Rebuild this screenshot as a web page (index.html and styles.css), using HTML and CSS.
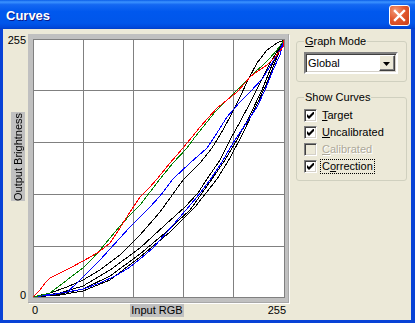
FILE: index.html
```html
<!DOCTYPE html>
<html lang="en">
<head>
  <meta charset="UTF-8" />
  <title>Curves</title>
  <link rel="stylesheet" href="styles.css">
</head>
<body>
<div class="window">
  <div class="titlebar">
    <span class="title">Curves</span>
    <button class="close" title="Close">
      <svg width="13" height="13" viewBox="0 0 13 13"><path d="M2 2L11 11M11 2L2 11" stroke="#fff" stroke-width="2.4" stroke-linecap="square"/></svg>
    </button>
  </div>
  <div class="client">
    <div class="chart">
      <div class="yaxis">
        <span class="tick">255</span>
        <span class="axis-name vertical">Output Brightness</span>
        <span class="tick low">0</span>
      </div>
      <div class="plot-frame">
        <svg class="plot" width="252" height="259" viewBox="33 39 252 259" shape-rendering="crispEdges">
          <path class="grid" d="M33.5 39V298M83.5 39V298M133.5 39V298M183.5 39V298M233.5 39V298M284.5 39V298M33 39.5H285M33 90.5H285M33 142.5H285M33 194.5H285M33 246.5H285M33 297.5H285"/>
          <g class="curves">
            <polyline class="black" points="33,297 50,293 67,287 83,280 100,270 120,255 140,235 160,212 183,180 200,163 212,148 223,130 232,113 240,97 248,80 257,63 267,50 277,43 284,40"/>
            <polyline class="black" points="33,297 60,293 83,286 110,270 140,248 165,225 185,207 198,193 207,179 220,160 230,140 240,122 250,103 260,83 270,63 284,40"/>
            <polyline class="black" points="33,297 60,294 83,289 110,276 140,254 165,233 190,210 212,179 225,160 237,140 250,115 262,90 272,65 284,40"/>
            <polyline class="black" points="33,297 60,295 83,291 110,280 140,257 170,232 195,207 217,179 230,158 242,135 255,108 266,85 275,62 284,40"/>
            <polyline class="blue" points="33,297 50,295 67,292 83,289 100,283 117,275 130,267 140,259 153,248 167,232 180,217 197,197 210,180 222,162 233,143 245,125 257,107 265,90 273,70 280,55 284,40"/>
            <polyline class="blue" points="33,297 45,295 55,294 67,292 75,285 83,277 92,268 100,260 110,249 120,238 130,227 140,217 150,207 160,196 173,179 190,163 207,148 217,133 227,117 240,102 250,92 263,78 272,63 280,50 284,40"/>
            <polyline class="green" points="33,297 42,295 50,293 58,287 67,280 75,274 83,268 92,259 100,250 110,238 120,226 130,215 140,205 150,192 160,179 173,163 187,148 195,137 203,127 215,112 230,97 240,87 247,80 255,72 262,66 270,58 277,50 284,40"/>
            <polyline class="red" points="33,297 40,290 45,283 50,278 60,273 70,268 83,261 92,256 100,251 110,243 120,228 130,212 140,197 150,187 157,179 170,163 183,148 192,137 200,127 208,118 217,108 227,100 237,92 245,83 250,77 258,71 267,65 275,57 283,47 284,40"/>
          </g>
        </svg>
      </div>
      <div class="corner"></div>
      <div class="xaxis">
        <span class="tick">0</span>
        <span class="axis-name">Input RGB</span>
        <span class="tick right">255</span>
      </div>
    </div>

    <div class="side">
      <fieldset class="group mode">
        <legend><u>G</u>raph Mode</legend>
        <div class="combo">
          <span class="combo-text">Global</span>
          <span class="combo-btn"><svg width="7" height="4" viewBox="0 0 7 4"><path d="M0 0H7L3.5 4Z" fill="#000"/></svg></span>
        </div>
      </fieldset>
      <fieldset class="group curves-box">
        <legend>Show Curves</legend>
        <label class="check"><span class="box"><svg width="7" height="7" viewBox="0 0 7 7"><path d="M0 2L2 4L7 -1V2L2 7L0 5Z" fill="#000"/></svg></span><span class="text"><u>T</u>arget</span></label>
        <label class="check"><span class="box"><svg width="7" height="7" viewBox="0 0 7 7"><path d="M0 2L2 4L7 -1V2L2 7L0 5Z" fill="#000"/></svg></span><span class="text"><u>U</u>ncalibrated</span></label>
        <label class="check disabled"><span class="box"></span><span class="text"><u>C</u>alibrated</span></label>
        <label class="check"><span class="box"><svg width="7" height="7" viewBox="0 0 7 7"><path d="M0 2L2 4L7 -1V2L2 7L0 5Z" fill="#000"/></svg></span><span class="text focus">C<u>o</u>rrection</span></label>
      </fieldset>
    </div>
  </div>
</div>
</body>
</html>
```

FILE: styles.css
```css
* { box-sizing: border-box; margin: 0; padding: 0; }
html, body { width: 100%; height: 100%; }
body {
  font-family: "Liberation Sans", Arial, sans-serif;
  font-size: 11px;
  line-height: 13px;
  color: #000;
  background: #ece9d8;
}
.window {
  width: 415px; height: 323px;
  display: flex; flex-direction: column;
  background: #0842d6;
}
.titlebar {
  height: 29px;
  display: flex; align-items: center; justify-content: space-between;
  padding: 0 5px 0 6px;
  background: linear-gradient(#0a5de8 0%, #3c93ff 7%, #1468f2 16%, #0058ee 40%, #0056ea 80%, #0049dc 94%, #003fc8 100%);
}
.title {
  font-size: 13px; font-weight: bold; color: #fff;
  text-shadow: 1px 1px #0a1a8a;
  margin-top: 1px;
}
.close {
  width: 21px; height: 21px;
  margin-top: 1px;
  border: 1px solid #fff; border-radius: 3px;
  background: radial-gradient(circle at 30% 25%, #f39a78 0%, #e2592f 45%, #c93d17 100%);
  display: flex; align-items: center; justify-content: center;
}
.close svg { display: block; }
.client {
  flex: 1;
  display: flex;
  margin: 0 4px 3px 3px;
  background: #ece9d8;
}

/* chart */
.chart {
  display: grid;
  grid-template-columns: 25px 261px;
  grid-template-rows: 269px auto;
  padding-top: 5px;
}
.yaxis {
  display: flex; flex-direction: column;
  align-items: flex-end;
  padding: 0 2px 1px 0;
}
.yaxis .low { margin-top: auto; }
.axis-name {
  background: #c0c0c0;
  color: #000;
  white-space: nowrap;
}
.vertical {
  writing-mode: vertical-rl;
  transform: rotate(180deg);
  width: 14px;
  height: 89px;
  text-align: center;
  line-height: 14px;
  margin: 65px 1px 0 0;
}
.plot-frame {
  padding: 5px 4px 5px 5px;
  background: #c0c0c0;
  box-shadow: inset -1px -1px 0 #a8a8a8, 1px 1px 0 #fff;
}
.plot { display: block; background: #fff; }
.plot .grid { stroke: #808080; stroke-width: 1; fill: none; }
.plot polyline { fill: none; stroke-width: 1; }
.plot .black { stroke: #000; }
.plot .blue { stroke: #0000ff; }
.plot .green { stroke: #008000; }
.plot .red { stroke: #ff0000; }
.xaxis {
  display: grid;
  grid-template-columns: 1fr auto 1fr;
  align-items: start;
  padding: 1px 3px 0 4px;
}
.xaxis .axis-name { padding: 0 1px; margin-right: 4px; }
.xaxis .right { text-align: right; }

/* right side */
.side {
  margin-left: 7px;
  padding-top: 6px;
  width: 111px;
  display: flex; flex-direction: column; gap: 9px;
}
.group {
  border: 1px solid #d0d0bf;
  border-radius: 3px;
  padding: 4px 7px 7px 7px;
}
.group legend {
  padding: 0 1px;
}
.combo {
  height: 22px;
  display: flex; align-items: stretch;
  background: #fff;
  border: 2px solid;
  border-color: #808080 #fff #fff #808080;
  box-shadow: inset 1px 1px 0 #404040, inset -1px -1px 0 #d4d0c8;
  margin-right: 1px;
}
.combo-text { flex: 1; padding: 3px 0 0 2px; }
.combo-btn {
  width: 16px;
  margin: 1px 1px 1px 0;
  background: #ece9d8;
  border: 1px solid;
  border-color: #fff #404040 #404040 #fff;
  box-shadow: inset -1px -1px 0 #808080;
  display: flex; align-items: center; justify-content: center;
}
.combo-btn svg { display: block; margin: 1px 1px 0 0; }
.curves-box { padding: 3px 7px 5px 7px; }
.check {
  display: flex; align-items: center; gap: 5px;
  height: 17px;
}
.box {
  width: 13px; height: 13px;
  background: #fff;
  border: 1px solid;
  border-color: #808080 #fff #fff #808080;
  box-shadow: inset 1px 1px 0 #404040, inset -1px -1px 0 #d4d0c8;
  display: flex; align-items: center; justify-content: center;
}
.box svg { display: block; }
.disabled .box { background: #ece9d8; }
.disabled .text { color: #aca899; text-shadow: 1px 1px #fff; }
.focus { outline: 1px dotted #000; padding: 0 1px; margin-left: -1px; }
```
